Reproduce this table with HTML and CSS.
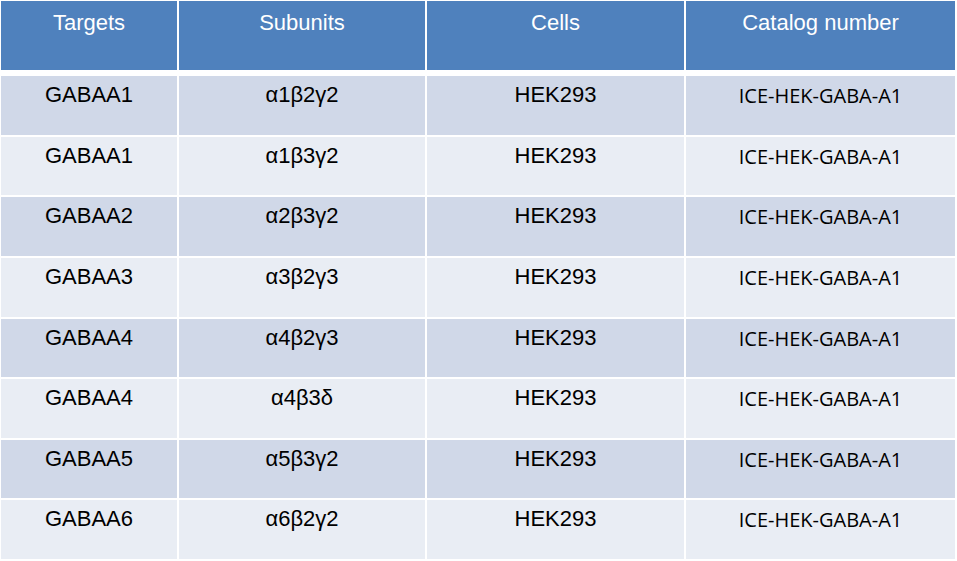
FILE: index.html
```html
<!DOCTYPE html>
<html lang="en">
<head>
<meta charset="utf-8">
<title>GABAA cell lines</title>
<link rel="stylesheet" href="styles.css">
</head>
<body>
<div class="table">
  <div class="row head">
    <div class="cell">Targets</div>
    <div class="cell">Subunits</div>
    <div class="cell">Cells</div>
    <div class="cell">Catalog number</div>
  </div>
  <div class="row odd">
    <div class="cell">GABAA1</div>
    <div class="cell">α1β2γ2</div>
    <div class="cell">HEK293</div>
    <div class="cell cat">ICE-HEK-GABA-A1</div>
  </div>
  <div class="row even">
    <div class="cell">GABAA1</div>
    <div class="cell">α1β3γ2</div>
    <div class="cell">HEK293</div>
    <div class="cell cat">ICE-HEK-GABA-A1</div>
  </div>
  <div class="row odd">
    <div class="cell">GABAA2</div>
    <div class="cell">α2β3γ2</div>
    <div class="cell">HEK293</div>
    <div class="cell cat">ICE-HEK-GABA-A1</div>
  </div>
  <div class="row even">
    <div class="cell">GABAA3</div>
    <div class="cell">α3β2γ3</div>
    <div class="cell">HEK293</div>
    <div class="cell cat">ICE-HEK-GABA-A1</div>
  </div>
  <div class="row odd">
    <div class="cell">GABAA4</div>
    <div class="cell">α4β2γ3</div>
    <div class="cell">HEK293</div>
    <div class="cell cat">ICE-HEK-GABA-A1</div>
  </div>
  <div class="row even">
    <div class="cell">GABAA4</div>
    <div class="cell">α4β3δ</div>
    <div class="cell">HEK293</div>
    <div class="cell cat">ICE-HEK-GABA-A1</div>
  </div>
  <div class="row odd">
    <div class="cell">GABAA5</div>
    <div class="cell">α5β3γ2</div>
    <div class="cell">HEK293</div>
    <div class="cell cat">ICE-HEK-GABA-A1</div>
  </div>
  <div class="row even">
    <div class="cell">GABAA6</div>
    <div class="cell">α6β2γ2</div>
    <div class="cell">HEK293</div>
    <div class="cell cat">ICE-HEK-GABA-A1</div>
  </div>
</div>
</body>
</html>
```
FILE: styles.css
```css
html, body {
  margin: 0;
  padding: 0;
  background: #ffffff;
}

body {
  font-family: "Liberation Sans", Arial, sans-serif;
  font-size: 22px;
  color: #000000;
}

.table {
  display: flex;
  flex-direction: column;
  gap: 2px;
  padding: 1px 0 0 1px;
  width: 954px;
}

.row {
  display: grid;
  grid-template-columns: 176px 246px 257px 269px;
  column-gap: 2px;
  height: 58.625px;
}

.row.head {
  height: 69px;
  margin-bottom: 4px;
}

.cell {
  text-align: center;
  padding-top: 6px;
  line-height: 25px;
  white-space: nowrap;
}

.head .cell {
  background: #4f81bd;
  color: #ffffff;
  padding-top: 9px;
}

.odd .cell {
  background: #d0d8e8;
}

.even .cell {
  background: #e9edf4;
}

.cat {
  font-family: "Open Sans", "Noto Sans", sans-serif;
  font-size: 20px;
  padding-top: 7px;
}
```
